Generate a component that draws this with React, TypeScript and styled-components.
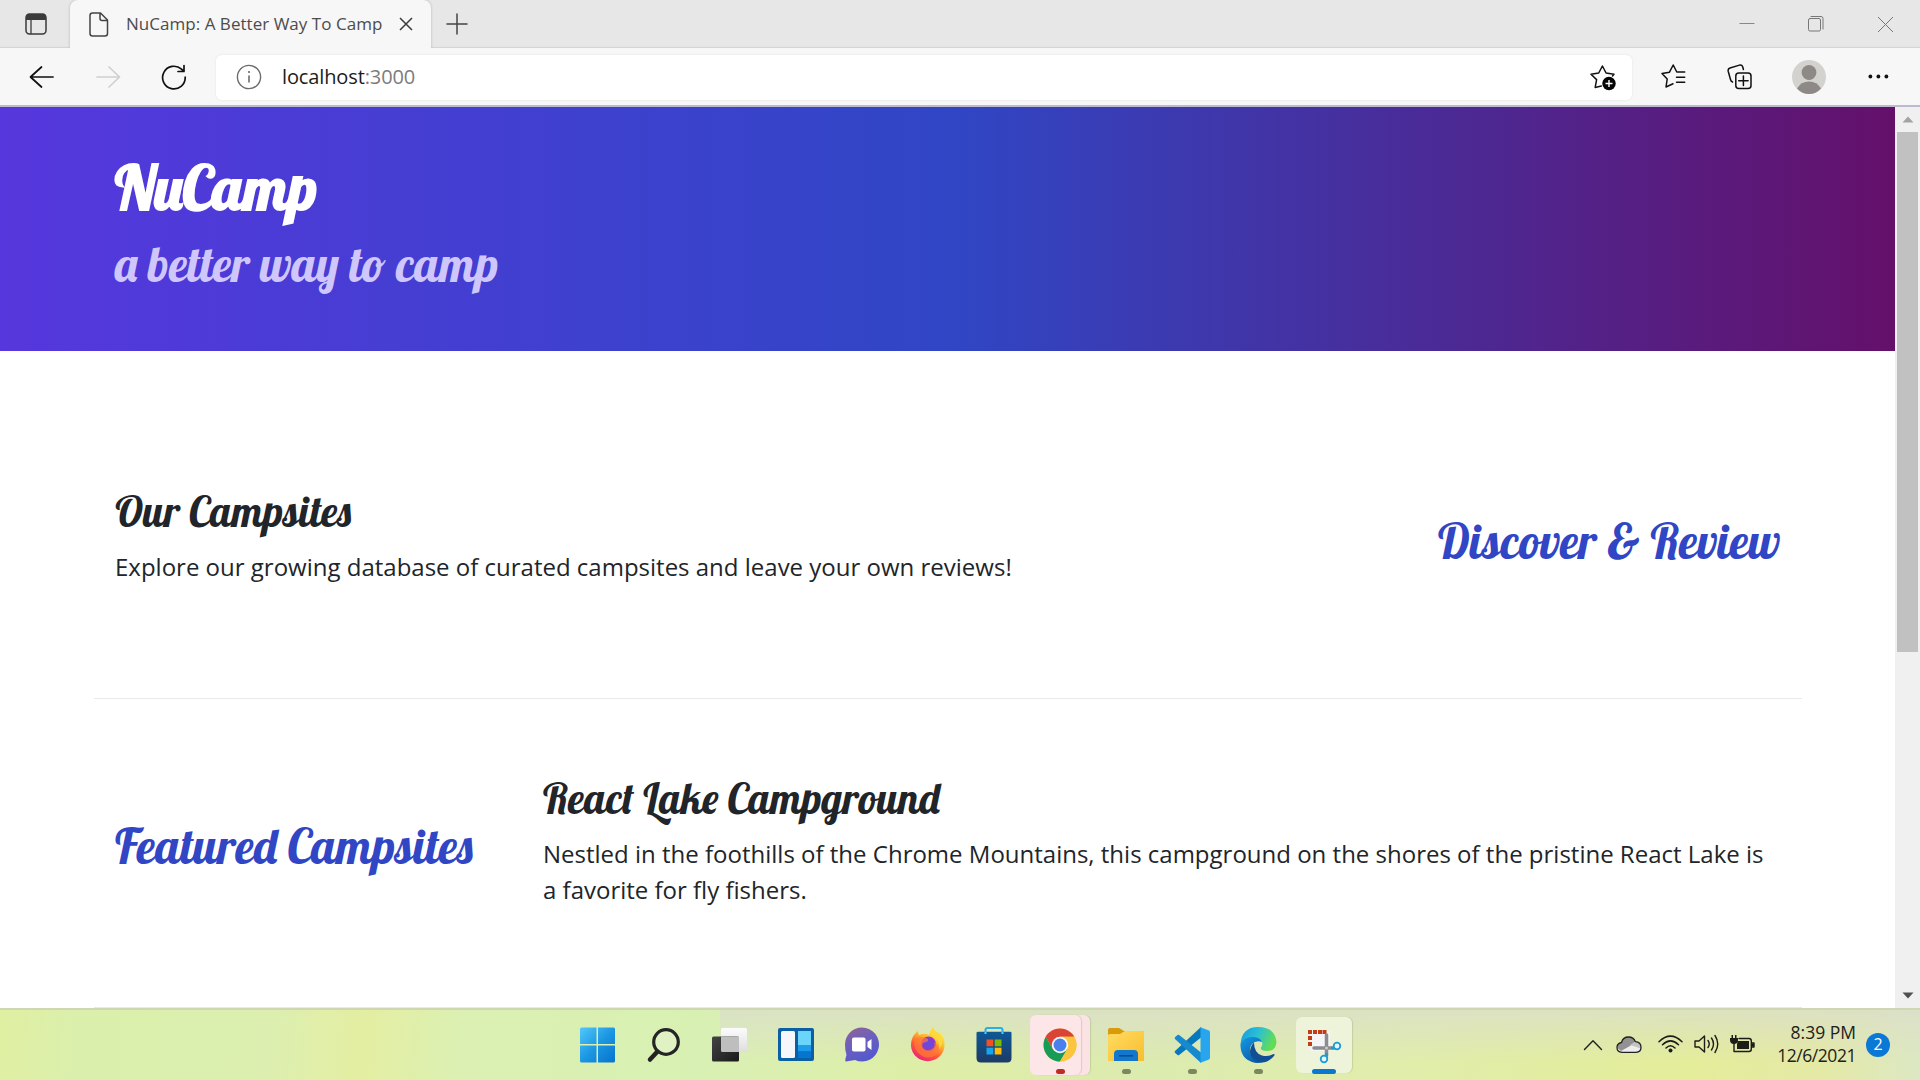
import React from "react";
import styled, { createGlobalStyle } from "styled-components";

const GlobalStyle = createGlobalStyle`
  * { box-sizing: border-box; }
  body { margin: 0; background: #fff; overflow: hidden; font-family: "Open Sans", "Noto Sans", sans-serif; }
  h1, h2, p { margin: 0; }
  svg { display: block; flex: none; }
`;

const Screen = styled.div`
  width: 1920px;
  height: 1080px;
  display: flex;
  flex-direction: column;
  overflow: hidden;
`;

/* ---------- browser frame ---------- */

const TabStrip = styled.div`
  height: 48px;
  flex: none;
  display: flex;
  background: #e7e7e7;
  box-shadow: inset 0 -2px 1px -1px #d2d2d2;
`;

const TabActions = styled.div`
  width: 70px;
  display: flex;
  align-items: center;
  padding-left: 25px;
`;

const Tab = styled.div`
  width: 361px;
  display: flex;
  align-items: center;
  padding-left: 19px;
  background: #f7f7f7;
  border-radius: 8px 8px 0 0;
  box-shadow: 0 0 3px rgba(0, 0, 0, 0.22);
  clip-path: inset(0 -4px 0 -4px);
`;

const TabTitle = styled.span`
  width: 256px;
  margin: 0 17px 0 17px;
  font-size: 17px;
  line-height: 24px;
  letter-spacing: 0.03px;
  white-space: nowrap;
  color: #4c4c4c;
`;

const NewTab = styled.div`
  display: flex;
  align-items: center;
  padding-left: 15px;
`;

const WindowButtons = styled.div`
  margin-left: auto;
  display: flex;
  align-items: center;
  gap: 53px;
  padding-right: 26px;
`;

const Toolbar = styled.div`
  height: 57px;
  flex: none;
  display: flex;
  align-items: center;
  background: #f7f7f7;
`;

const NavButtons = styled.div`
  width: 216px;
  display: flex;
  align-items: center;
  gap: 40px;
  padding-left: 29px;
`;

const AddressBar = styled.div`
  width: 1416px;
  height: 45px;
  margin-bottom: -1px;
  display: flex;
  align-items: center;
  padding: 0 15px 0 20px;
  background: #fff;
  border-radius: 6px;
  box-shadow: 0 0 3px rgba(0, 0, 0, 0.08);
`;

const Url = styled.span`
  flex: 1;
  padding: 0 0 1px 20px;
  font-size: 20px;
  line-height: 28px;
  letter-spacing: -0.12px;
  color: #1c1c1c;
`;

const Port = styled.span`
  color: #7c7c7c;
`;

const ToolbarActions = styled.div`
  display: flex;
  align-items: center;
  padding-left: 29px;
`;

const ActionSlot = styled.div<{ $width: number }>`
  width: ${(p) => p.$width}px;
`;

/* ---------- page ---------- */

const Viewport = styled.div`
  height: 903px;
  flex: none;
  display: flex;
  border-top: 2px solid #bdb9cf;
`;

const Page = styled.main`
  width: 1895px;
  background: #fff;
`;

const Scrollbar = styled.div`
  width: 25px;
  display: flex;
  flex-direction: column;
  align-items: center;
  background: #f0f0f0;
`;

const ScrollTrack = styled.div`
  flex: 1;
`;

const Thumb = styled.div`
  width: 21px;
  height: 520px;
  background: #c1c1c1;
`;

const ScrollArrow = styled.div`
  height: 25px;
  display: flex;
  align-items: center;
`;

const Jumbotron = styled.header`
  height: 244px;
  padding: 45px 0 0 115px;
  background: linear-gradient(to right, #5637dd, #3046c5 50%, #64106a);
`;

const scriptFace = `
  font-family: Lobster, "Liberation Serif", serif;
  font-weight: 500;
  white-space: nowrap;
`;

const SiteTitle = styled.h1`
  ${scriptFace}
  font-weight: 700;
  font-size: 60px;
  line-height: 72px;
  color: #fff;
`;

const Tagline = styled.h2`
  ${scriptFace}
  margin-top: 10px;
  font-size: 48px;
  line-height: 60px;
  color: #cfc6fb;
`;

const Section = styled.section<{ $height: number; $columns: string }>`
  height: ${(p) => p.$height}px;
  margin: 0 93px 0 94px;
  padding: 0 21px;
  display: grid;
  grid-template-columns: ${(p) => p.$columns};
  align-items: center;
  border-bottom: 1px solid #e9e9ea;
`;

const SectionTitle = styled.h2<{ $top?: number; $bottom?: number }>`
  ${scriptFace}
  padding: ${(p) => p.$top ?? 0}px 0 ${(p) => p.$bottom ?? 0}px;
  font-size: 48px;
  line-height: 60px;
  color: #3046c5;
`;

const Article = styled.article<{ $top?: number; $bottom?: number }>`
  padding: ${(p) => p.$top ?? 0}px 0 ${(p) => p.$bottom ?? 0}px;
`;

const Heading = styled.h2`
  ${scriptFace}
  padding-top: 1px;
  margin-bottom: 11px;
  font-size: 42px;
  line-height: 52px;
  color: #212529;
`;

const Copy = styled.p`
  font-size: 24px;
  line-height: 36px;
  color: #212529;
`;

/* ---------- taskbar ---------- */

const Taskbar = styled.footer`
  height: 72px;
  flex: none;
  display: flex;
  align-items: stretch;
  border-top: 2px solid #ced6b2;
  background:
    linear-gradient(to bottom, rgba(218, 222, 204, 0.75), rgba(218, 222, 204, 0) 75%) 720px 0 / 1200px 100% no-repeat,
    linear-gradient(95deg, #e0efa2 0%, #dbefac 4%, #dcefb0 14%, #e4eea2 19%, #dbf0b2 24%, #d9f0b4 37%, #deeea6 48%,
      #dcebaf 60%, #e0edac 72%, #e4ed9a 88%, #e4e9a6 95%, #dce8c4 100%);
`;

const Apps = styled.div`
  display: flex;
  margin-left: 565px;
`;

const AppButton = styled.div`
  position: relative;
  width: 66px;
  padding-top: 17px;
  display: flex;
  justify-content: center;
`;

const AppPlate = styled.div<{ $tone: string; $left: number; $width: number; $top: number; $height: number }>`
  position: absolute;
  left: ${(p) => p.$left}px;
  top: ${(p) => p.$top}px;
  width: ${(p) => p.$width}px;
  height: ${(p) => p.$height}px;
  border-radius: 6px;
  background: ${(p) => p.$tone};
  box-shadow: 1px 0 1px rgba(90, 90, 60, 0.18);
`;

const AppIcon = styled.div`
  position: relative;
  height: 38px;
`;

const Indicator = styled.i<{ $width: number; $color: string }>`
  position: absolute;
  top: 59px;
  left: ${(p) => 33 - p.$width / 2}px;
  width: ${(p) => p.$width}px;
  height: 5px;
  border-radius: 3px;
  background: ${(p) => p.$color};
`;

const Tray = styled.div`
  margin-left: auto;
  display: flex;
  align-items: center;
  padding-right: 30px;
`;

const TraySlot = styled.div<{ $width: number }>`
  width: ${(p) => p.$width}px;
`;

const Clock = styled.div`
  width: 92px;
  margin-right: 10px;
  padding-bottom: 2px;
  text-align: right;
  font-size: 17.5px;
  line-height: 23px;
  letter-spacing: -0.45px;
  white-space: nowrap;
  color: #20221a;
`;

const Time = styled.div`
  letter-spacing: 0;
`;

const Badge = styled.span`
  width: 24px;
  height: 24px;
  margin-bottom: 1px;
  border-radius: 50%;
  background: #0a78d4;
  color: #fff;
  font-size: 16px;
  line-height: 23px;
  text-align: center;
`;

/* ---------- icons ---------- */

const line = { fill: "none", strokeLinecap: "round" as const, strokeLinejoin: "round" as const };

const TabMenuIcon = () => (
  <svg width="22" height="22" viewBox="0 0 22 22">
    <rect x="1" y="1" width="20" height="20" rx="3.5" {...line} stroke="#3b3b3b" strokeWidth="1.5" />
    <path d="M1 7V4Q1 1 4 1H18Q21 1 21 4V7Z" fill="#3b3b3b" />
    <path d="M6 6V21" stroke="#3b3b3b" strokeWidth="1.3" />
  </svg>
);
const PageIcon = () => (
  <svg width="20" height="25" viewBox="0 0 20 25">
    <path d="M3.5 1H11.5L18.5 8V21.5Q18.5 24 16 24H3.5Q1 24 1 21.5V3.5Q1 1 3.5 1ZM11 1V6.5Q11 8.5 13 8.5H18.5" {...line} stroke="#444" strokeWidth="1.5" />
  </svg>
);
const CrossIcon = ({ size, color, weight }: { size: number; color: string; weight: number }) => (
  <svg width={size} height={size} viewBox={`0 0 ${size} ${size}`}>
    <path d={`M1 1L${size - 1} ${size - 1}M${size - 1} 1L1 ${size - 1}`} stroke={color} strokeWidth={weight} />
  </svg>
);
const PlusIcon = () => (
  <svg width="22" height="22" viewBox="0 0 22 22"><path d="M11 1V21M1 11H21" {...line} stroke="#444" strokeWidth="1.5" /></svg>
);
const MinimizeIcon = () => (
  <svg width="16" height="16" viewBox="0 0 16 16"><path d="M.5 7.500H15.500" stroke="#888" /></svg>
);
const RestoreIcon = () => (
  <svg width="16" height="16" viewBox="0 0 16 16">
    <rect x=".5" y="2.5" width="12" height="12.5" rx="1.5" {...line} stroke="#777" />
    <path d="M3 .5H13Q15 .5 15 2.5V13" {...line} stroke="#777" />
  </svg>
);
const ArrowIcon = ({ color, flip }: { color: string; flip?: boolean }) => (
  <svg width="26" height="24" viewBox="0 0 26 24">
    <path d={flip ? "M2 12H24.500M14 2L24.500 12L14 22" : "M24 12H2M12.5 2L1.5 12L12.5 22"} {...line} stroke={color} strokeWidth="1.7" />
  </svg>
);
const ReloadIcon = () => (
  <svg width="26" height="26" viewBox="0 0 26 26">
    <path d="M24.2 13.2A11.3 11.3 0 1 1 20.5 5.2L22.5 7M23 1.5V7.5H17" {...line} stroke="#111" strokeWidth="1.7" />
  </svg>
);
const InfoIcon = () => (
  <svg width="26" height="26" viewBox="0 0 26 26">
    <circle cx="13" cy="13" r="11.6" {...line} stroke="#6b6b6b" strokeWidth="1.4" />
    <path d="M13 11.5V18.5" stroke="#6b6b6b" strokeWidth="1.6" /><circle cx="13" cy="8" r="1.1" fill="#6b6b6b" />
  </svg>
);
const StarAddIcon = () => (
  <svg width="27" height="27" viewBox="0 0 27 27">
    <path d="M11.3 22L5.2 23.4L6.6 15.6L1 10.2L8.7 9L12.4 2L16.1 9L24 10.2L22.5 12" {...line} stroke="#111" strokeWidth="1.5" />
    <circle cx="19" cy="19.5" r="6.7" fill="#050505" />
    <path d="M19 16V23M15.5 19.5H22.5" stroke="#fff" strokeWidth="1.4" />
  </svg>
);
const FavoritesIcon = () => (
  <svg width="25" height="25" viewBox="0 0 25 25">
    <path d="M12 19.7L5 23L6.2 15L1 9.5L8.5 8.200L12.2 1L15.8 8H23.7M15.5 13.200H23.7M15.5 18.300H23.7" {...line} stroke="#111" strokeWidth="1.5" />
  </svg>
);
const CollectionsIcon = () => (
  <svg width="25" height="26" viewBox="0 0 25 26">
    <rect x="8.8" y="9" width="15.2" height="15.5" rx="3" {...line} stroke="#111" strokeWidth="1.5" />
    <path d="M16.4 12V21.500M11.7 16.7H21.1M5.5 18Q4 17.500 3.5 15.500L1.2 7.2Q.7 4.7 3 4L12.5 1.1Q15 .7 15.8 3L16.4 5.500" {...line} stroke="#111" strokeWidth="1.5" />
  </svg>
);
const ProfileIcon = () => (
  <svg width="34" height="34" viewBox="0 0 34 34">
    <circle cx="17" cy="17" r="17" fill="#d4d2cf" />
    <circle cx="17" cy="12.5" r="7.4" fill="#8d8987" />
    <path d="M5 28.5Q9 21.5 17 21.5T29 28.5Q24 34 17 34T5 28.5Z" fill="#8d8987" />
  </svg>
);
const DotsIcon = () => (
  <svg width="21" height="5" viewBox="0 0 21 5">
    {[2.4, 10.4, 18.4].map((x) => <circle key={x} cx={x} cy="2.5" r="1.9" fill="#111" />)}
  </svg>
);

const StartIcon = () => (
  <svg width="36" height="36" viewBox="0.5 0 36 36">
    <defs><linearGradient id="win" x2="1" y2="1"><stop stopColor="#52c8fb" /><stop offset=".5" stopColor="#1c97e2" /><stop offset="1" stopColor="#0673cd" /></linearGradient></defs>
    <path d="M2 .5H17V17H.5V2Q.5.5 2 .5ZM18.5.5H34Q35.5.5 35.5 2V17H18.5ZM.5 18.5H17V35.5H2Q.5 35.5.5 34ZM18.5 18.5H35.5V34Q35.5 35.5 34 35.5H18.5Z" fill="url(#win)" />
  </svg>
);
const SearchIcon = () => (
  <svg width="36" height="36" viewBox="0 0 36 36">
    <path d="M11.5 24.5L4 32.5" stroke="#222" strokeWidth="4.5" strokeLinecap="round" />
    <circle cx="20" cy="15" r="12.3" fill="#e4f3ce" fillOpacity=".6" stroke="#252525" strokeWidth="3.2" />
  </svg>
);
const TaskViewIcon = () => (
  <svg width="38" height="36" viewBox="0 0 38 36">
    <defs><linearGradient id="tvw" x2="0" y2="1"><stop stopColor="#fcfcfc" /><stop offset="1" stopColor="#dedede" /></linearGradient>
      <linearGradient id="tvb" x2="1" y2="1"><stop stopColor="#444" /><stop offset="1" stopColor="#191919" /></linearGradient></defs>
    <rect x="10" y="1" width="26" height="24" rx="1.5" fill="url(#tvw)" />
    <rect x="1" y="9.5" width="27" height="25" rx="1.5" fill="url(#tvb)" />
    <path d="M10 9.5H28V25H11.5Q10 25 10 23.5Z" fill="#bebebe" />
  </svg>
);
const WidgetsIcon = () => (
  <svg width="36" height="36" viewBox="0 -1 36 36">
    <rect width="36" height="33" rx="2" fill="#0b5fa5" />
    <rect x="3" y="3" width="14" height="27" rx="1.5" fill="#f5f7fa" />
    <path d="M20 3H33V17.5H20Z" fill="#6bd4fb" /><path d="M20 17.5H33V23.5H20Z" fill="#1d9bea" /><path d="M20 23.5H33V30H20Z" fill="#0675cf" />
  </svg>
);
const ChatIcon = () => (
  <svg width="36" height="36" viewBox="0 0 36 36">
    <defs><linearGradient id="chat" x1=".2" x2=".7" y2="1"><stop stopColor="#8c6397" /><stop offset=".45" stopColor="#6b5fc0" /><stop offset="1" stopColor="#5158cf" /></linearGradient></defs>
    <path d="M18 .5A17 17 0 1 1 11 33L2 34.500Q.3 34.500 2.500 28Q1 24 1 17.500A17 17 0 0 1 18 .5Z" fill="url(#chat)" />
    <rect x="8" y="10.500" width="13.5" height="14" rx="1.8" fill="#fff" />
    <path d="M23.500 15L27.500 12V23L23.500 20Z" fill="#fff" />
  </svg>
);
const FirefoxIcon = () => (
  <svg width="36" height="36" viewBox="0 0 36 36">
    <defs>
      <linearGradient id="ff" x1=".8" y1=".1" x2=".3" y2="1"><stop stopColor="#fff14f" /><stop offset=".35" stopColor="#ffb52d" /><stop offset=".65" stopColor="#ff5a34" /><stop offset="1" stopColor="#e9207b" /></linearGradient>
      <radialGradient id="ffc"><stop stopColor="#5b4fe0" /><stop offset="1" stopColor="#9438c6" /></radialGradient>
    </defs>
    <path d="M4 8L7.500 4L9 8L12 7Q16 6 19 8Q20 3 23 0Q24 5 28 7L30 5Q35 11 34.500 19A16.800 16.500 0 0 1 1 19Q1 12 4 8Z" fill="url(#ff)" />
    <circle cx="18.500" cy="17" r="7.500" fill="url(#ffc)" />
    <path d="M4 12Q12 8 18 12Q19 15 14 15.500Q11 17 13 21Q17 25 22 22Q26 19 24 15Q32 19 27 27Q20 33 12 29Q3 24 4 12Z" fill="#ff7a35" fillOpacity=".7" />
    <path d="M22 9Q31 13 29 22Q36 14 29 6Q24 5 23 0Q20 4 22 9Z" fill="#ffd83a" />
  </svg>
);
const StoreIcon = () => (
  <svg width="36" height="36" viewBox="0 0 36 36">
    <defs><linearGradient id="store" x2="0" y2="1"><stop stopColor="#0e5896" /><stop offset="1" stopColor="#1d3b66" /></linearGradient></defs>
    <path d="M9.500 8V3Q9.500 1 11.500 1H24.500Q26.500 1 26.500 3V8" fill="none" stroke="#29aee6" strokeWidth="2" />
    <path d="M.5 6Q.5 4.800 2 4.800H34Q35.500 4.800 35.500 6V31Q35.500 35.500 31 35.500H5Q.5 35.500.5 31Z" fill="url(#store)" />
    <path d="M10.500 12.500H17.300V19.300H10.500Z" fill="#f25022" /><path d="M18.700 12.500H25.500V19.300H18.700Z" fill="#7fba00" />
    <path d="M10.500 20.700H17.300V27.500H10.500Z" fill="#16a5ef" /><path d="M18.700 20.700H25.500V27.500H18.700Z" fill="#ffb908" />
    <path d="M9.500 4.500V7M26.500 4.500V7" stroke="#52cdf7" strokeWidth="2" />
  </svg>
);
const ChromeIcon = () => (
  <svg width="36" height="36" viewBox="0 0 48 48">
    <circle cx="24" cy="24" r="22" fill="#fbc63d" />
    <path d="M24 13H43A22 22 0 0 0 4.950 13L14.500 29.500Z" fill="#da4437" />
    <path d="M14.470 29.500L4.950 13A22 22 0 0 0 24 46L33.530 29.500Z" fill="#169c57" />
    <path d="M24 13H43.050A22 22 0 0 1 24 46L33.530 29.500Z" fill="#fbc63d" />
    <circle cx="24" cy="24" r="11" fill="#f7f7f7" /><circle cx="24" cy="24" r="8.600" fill="#4a80ee" />
  </svg>
);
const FolderIcon = () => (
  <svg width="36" height="36" viewBox="0 0 36 36">
    <defs><linearGradient id="fold" x2="1" y2="1"><stop stopColor="#ffdc62" /><stop offset="1" stopColor="#f9bd2d" /></linearGradient></defs>
    <path d="M0 3Q0 1 2 1H11L16 4H34Q36 4 36 6V12H0Z" fill="#d99b0a" />
    <path d="M0 8.500Q0 7 2 7H12L17 4H34.500Q36 4 36 5.500V34H0Z" fill="url(#fold)" />
    <path d="M6 34V27Q6 23 10 23H26Q30 23 30 27V34Z" fill="#1377cd" /><path d="M11 28.800H25" stroke="#0a4b8c" strokeWidth="1.500" />
  </svg>
);
const CodeIcon = () => (
  <svg width="36" height="36" viewBox="0 0 36 36">
    <path d="M27 0L1 24Q.2 25 1.200 26L3.500 28Q4.300 28.500 5.200 28L27 10.500Z" fill="#0878bd" />
    <path d="M27 36L1 12Q.2 11 1.200 10L3.500 8Q4.300 7.500 5.200 8L27 25.500Z" fill="#1689cf" />
    <path d="M26.500 .3L35 3.500Q36 4 36 5.500V30.500Q36 32 35 32.500L26.500 35.700Z" fill="#27a5ee" />
  </svg>
);
const EdgeIcon = () => (
  <svg width="37" height="36" viewBox="0 0 37 36">
    <defs>
      <linearGradient id="eg1" x2="1" y2=".35"><stop stopColor="#1596df" /><stop offset=".5" stopColor="#2abfd6" /><stop offset="1" stopColor="#62dc55" /></linearGradient>
      <linearGradient id="eg2" x2=".7" y2="1"><stop stopColor="#1499e3" /><stop offset="1" stopColor="#0a59a8" /></linearGradient>
    </defs>
    <path d="M.5 17Q2 0 18 0Q35 0 36.500 15Q36 24 27 24Q20 24 21 20.500Q23 18 22 15Q19 11 13 11Q4 11 .5 17Z" fill="url(#eg1)" />
    <path d="M.5 17Q4 10 12 10Q20 10 22 15Q16 13 12 17Q7 24 14 32Q19 36 25 34.500Q18 37 12 35Q0 31 .5 17Z" fill="url(#eg2)" />
    <path d="M14 15.500Q14 26 22 28.500Q28 30 33.500 27Q35.500 27 34 29Q27 37 19 35.300Q7 31 11 20Q12 17 14 15.500Z" fill="#104f94" />
  </svg>
);
const SnipIcon = () => (
  <svg width="36" height="38" viewBox="0 0 36 38">
    <rect x="4" y="4" width="20" height="20" fill="#f5f5f6" />
    {[[2, 3], [7, 3], [12, 3], [16.500, 3], [2, 9], [2, 15]].map(([x, y]) => <rect key={`${x}-${y}`} x={x} y={y} width="4" height="4" fill="#c43c16" />)}
    <path d="M20.500 8V29M8 21H28" stroke="#8a8c90" strokeWidth="3.500" strokeLinecap="round" />
    <circle cx="20.500" cy="21" r="1.500" fill="#ccc" />
    <circle cx="31" cy="19" r="3.300" fill="#eaf5f9" stroke="#1b9bd7" strokeWidth="1.800" />
    <circle cx="18" cy="32" r="3.300" fill="#eaf5f9" stroke="#1b9bd7" strokeWidth="1.800" />
    <path d="M25 21H28M20.500 26V29" stroke="#1b9bd7" strokeWidth="2.500" />
  </svg>
);

const ChevronIcon = () => (
  <svg width="20" height="12" viewBox="0 0 20 12"><path d="M1.500 10.500L10 1.800L18.500 10.500" {...line} stroke="#222" strokeWidth="1.400" /></svg>
);
const CloudIcon = () => (
  <svg width="26" height="18" viewBox="0 0 26 18">
    <path d="M6 16.300Q1 16 1 11.500Q1 7.500 5.500 6.500Q7 1 12.500 1Q17.500 1 19.300 5.600Q25 6 25 11.500Q25 16 20 16.300Z" fill="#eee" />
    <path d="M1.500 12Q1 7.500 5.500 6.500Q7 1 12.500 1Q17.500 1 19.300 5.600L14 10L5 15Z" fill="#929292" />
    <path d="M14 9L19 6Q25 6 25 12.500Z" fill="#c3c3c3" />
    <path d="M6 16.300Q1 16 1 11.500Q1 7.500 5.500 6.500Q7 1 12.500 1Q17.500 1 19.300 5.600Q25 6 25 11.500Q25 16 20 16.300Z" {...line} stroke="#222" strokeWidth="1.300" />
  </svg>
);
const WifiIcon = () => (
  <svg width="25" height="20" viewBox="0 0 25 20">
    <path d="M1 6.700Q12.500 -4.500 24 6.700M4.500 9.800Q12.500 2 20.500 9.800M8 13Q12.500 8.500 17 13" {...line} stroke="#1d1d18" strokeWidth="1.500" />
    <circle cx="12.500" cy="15.500" r="2" fill="#1d1d18" />
  </svg>
);
const VolumeIcon = () => (
  <svg width="25" height="22" viewBox="0 0 25 22">
    <path d="M1 7H5L10.500 2V18L5 13H1ZM14 6.500Q16.500 10 14 13.500M17.500 4Q21.500 10 17.500 16M21 1.500Q26.500 10 21 18.500" {...line} stroke="#1d1d18" strokeWidth="1.400" />
  </svg>
);
const BatteryIcon = () => (
  <svg width="25" height="22" viewBox="0 0 25 22">
    <path d="M9 4.500H19Q21.300 4.500 21.300 7V15Q21.300 17.500 19 17.500H5M21.300 9H24V13H21.300M4 9V17.500" {...line} stroke="#1d1d18" strokeWidth="1.400" />
    <path d="M8 7H19V15H7V10ZM0 4H8V6Q8 10 4 10T0 6ZM1.500 1H3V4H1.500ZM5 1H6.500V4H5Z" fill="#1d1d18" />
    <path d="M22 9.500H24V12.500H22Z" fill="#1d1d18" />
  </svg>
);
const Triangle = ({ down }: { down?: boolean }) => (
  <svg width="12" height="7" viewBox="0 0 12 7"><path d={down ? "M.5.500H11.500L6 6.500Z" : "M.5 6.500H11.500L6 .5Z"} fill={down ? "#505050" : "#a3a3a3"} /></svg>
);

type Entry = { name: string; Icon: React.FC; dot?: string; wide?: boolean };

const apps: Entry[] = [
  { name: "start", Icon: StartIcon },
  { name: "search", Icon: SearchIcon },
  { name: "taskview", Icon: TaskViewIcon },
  { name: "widgets", Icon: WidgetsIcon },
  { name: "chat", Icon: ChatIcon },
  { name: "firefox", Icon: FirefoxIcon },
  { name: "store", Icon: StoreIcon },
  { name: "chrome", Icon: ChromeIcon, dot: "#bd2c25" },
  { name: "explorer", Icon: FolderIcon, dot: "#7b875d" },
  { name: "code", Icon: CodeIcon, dot: "#7b875d" },
  { name: "edge", Icon: EdgeIcon, dot: "#7b875d" },
  { name: "snip", Icon: SnipIcon, dot: "#0878d0", wide: true },
];

export default function App() {
  return (
    <Screen>
      <GlobalStyle />
      <TabStrip>
        <TabActions><TabMenuIcon /></TabActions>
        <Tab>
          <PageIcon />
          <TabTitle>NuCamp: A Better Way To Camp</TabTitle>
          <CrossIcon size={14} color="#3b3b3b" weight={1.5} />
        </Tab>
        <NewTab><PlusIcon /></NewTab>
        <WindowButtons>
          <MinimizeIcon />
          <RestoreIcon />
          <CrossIcon size={17} color="#777" weight={1} />
        </WindowButtons>
      </TabStrip>
      <Toolbar>
        <NavButtons>
          <ArrowIcon color="#111" />
          <ArrowIcon color="#d0d0d0" flip />
          <ReloadIcon />
        </NavButtons>
        <AddressBar>
          <InfoIcon />
          <Url>localhost<Port>:3000</Port></Url>
          <StarAddIcon />
        </AddressBar>
        <ToolbarActions>
          <ActionSlot $width={66}><FavoritesIcon /></ActionSlot>
          <ActionSlot $width={65}><CollectionsIcon /></ActionSlot>
          <ActionSlot $width={76}><ProfileIcon /></ActionSlot>
          <DotsIcon />
        </ToolbarActions>
      </Toolbar>
      <Viewport>
        <Page>
          <Jumbotron>
            <SiteTitle>NuCamp</SiteTitle>
            <Tagline>a better way to camp</Tagline>
          </Jumbotron>
          <Section $height={348} $columns="1323px 1fr">
            <Article $top={20}>
              <Heading>Our Campsites</Heading>
              <Copy>Explore our growing database of curated campsites and leave your own reviews!</Copy>
            </Article>
            <SectionTitle $top={32}>Discover &amp; Review</SectionTitle>
          </Section>
          <Section $height={309} $columns="428px 1fr">
            <SectionTitle $bottom={14}>Featured Campsites</SectionTitle>
            <Article $bottom={26}>
              <Heading>React Lake Campground</Heading>
              <Copy>Nestled in the foothills of the Chrome Mountains, this campground on the shores of the pristine React Lake is a favorite for fly fishers.</Copy>
            </Article>
          </Section>
        </Page>
        <Scrollbar>
          <ScrollArrow><Triangle /></ScrollArrow>
          <ScrollTrack><Thumb /></ScrollTrack>
          <ScrollArrow><Triangle down /></ScrollArrow>
        </Scrollbar>
      </Viewport>
      <Taskbar>
        <Apps>
          {apps.map(({ name, Icon, dot, wide }) => (
            <AppButton key={name}>
              {name === "chrome" && (
                <>
                  <AppPlate $tone="#fbe3e4" $left={9} $width={54} $top={5} $height={60} />
                  <AppPlate $tone="#fde6e8" $left={3} $width={51} $top={5} $height={60} />
                </>
              )}
              {name === "snip" && <AppPlate $tone="#edf4d9" $left={5} $width={56} $top={7} $height={56} />}
              <AppIcon><Icon /></AppIcon>
              {dot && <Indicator $width={wide ? 24 : 9} $color={dot} />}
            </AppButton>
          ))}
        </Apps>
        <Tray>
          <TraySlot $width={33}><ChevronIcon /></TraySlot>
          <TraySlot $width={42}><CloudIcon /></TraySlot>
          <TraySlot $width={36}><WifiIcon /></TraySlot>
          <TraySlot $width={36}><VolumeIcon /></TraySlot>
          <TraySlot $width={34}><BatteryIcon /></TraySlot>
          <Clock><Time>8:39 PM</Time>12/6/2021</Clock>
          <Badge>2</Badge>
        </Tray>
      </Taskbar>
    </Screen>
  );
}
